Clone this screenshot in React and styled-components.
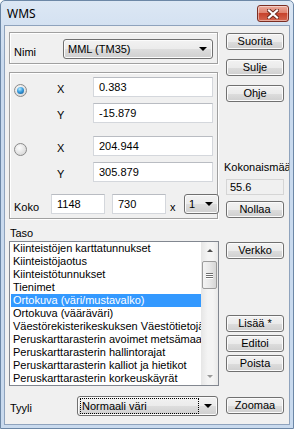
import React from 'react';
import styled, { createGlobalStyle, css } from 'styled-components';

const GlobalStyle = createGlobalStyle`
  html, body {
    margin: 0;
    padding: 0;
    background: #fff;
  }
  body {
    font-family: "Liberation Sans", Arial, sans-serif;
    font-size: 11px;
    color: #000;
  }
`;

const FONT = `11px "Liberation Sans", Arial, sans-serif`;

const Window = styled.div`
  box-sizing: border-box;
  width: 294px;
  height: 429px;
  display: flex;
  flex-direction: column;
  padding: 0 3px 3px 3px;
  border: 1px solid #6c87a6;
  border-radius: 5px 5px 0 0;
  background: linear-gradient(#dce7f4, #c9daee 60px, #c9daee);
`;

const TitleBar = styled.div`
  height: 24px;
  display: flex;
  align-items: flex-start;
  justify-content: space-between;
`;

const Title = styled.span`
  margin: 4px 0 0 3px;
  font: 12px "Noto Sans", "Open Sans", sans-serif;
  line-height: 17px;
  color: #000;
`;

const CloseButton = styled.div`
  box-sizing: border-box;
  width: 32px;
  height: 17px;
  margin: 4px 1px 0 0;
  display: flex;
  align-items: center;
  justify-content: center;
  border: 1px solid #7b2e23;
  border-radius: 3px;
  background: linear-gradient(#eaa99c 0%, #e08470 45%, #c7432c 50%, #d4664f 100%);
  box-shadow: inset 0 0 0 1px rgba(255, 255, 255, 0.45);
`;

const Body = styled.div`
  flex: 1;
  overflow: hidden;
  display: flex;
  flex-direction: column;
  padding: 6px 5px 0 4px;
  background: #f0f0f0;
  border: 1px solid #8fa3bd;
`;

const Section = styled.div`
  display: grid;
  grid-template-columns: 209px 58px;
  column-gap: 8px;
  margin-top: ${({ $top }) => $top || 0}px;
  ${({ $height }) => $height && css`height: ${$height}px;`}
`;

const Column = styled.div`
  display: flex;
  flex-direction: column;
  padding-top: ${({ $pad }) => $pad || 0}px;
`;

const GroupBox = styled.div`
  box-sizing: border-box;
  height: ${({ $height }) => $height}px;
  margin-top: ${({ $top }) => $top || 0}px;
  border: 1px solid #a0a0a0;
  box-shadow: inset 1px 1px 0 #fff, 1px 1px 0 #fff;
  padding: ${({ $pad }) => $pad};
`;

const Label = styled.span`
  line-height: 13px;
  white-space: nowrap;
  padding-top: ${({ $pad }) => $pad || 0}px;
  margin-top: ${({ $top }) => $top || 0}px;
  ${({ $width }) => $width && css`width: ${$width}px; flex-shrink: 0;`}
`;

const Row = styled.div`
  display: flex;
  align-items: flex-start;
  margin-top: ${({ $top }) => $top || 0}px;
`;

const Gap = styled.span`
  flex: 0 0 ${({ $size }) => $size}px;
`;

const TextBox = styled.div`
  box-sizing: border-box;
  width: ${({ $width }) => $width}px;
  height: 20px;
  padding: 0 0 0 5px;
  line-height: 18px;
  background: #fff;
  border: 1px solid #d4d7dc;
  border-top-color: #b9bcc2;
  flex-shrink: 0;
`;

const ReadOnlyBox = styled.div`
  box-sizing: border-box;
  width: 58px;
  height: 16px;
  margin-top: 5px;
  padding-left: 3px;
  line-height: 14px;
  background: #f0f0f0;
  border: 1px solid #d5d5d5;
`;

const buttonFace = css`
  border: 1px solid #707070;
  border-radius: 3px;
  background: linear-gradient(#f2f2f2 0%, #ebebeb 50%, #dddddd 51%, #cfcfcf 100%);
  box-shadow: inset 0 0 0 1px #fbfbfb;
`;

const Button = styled.div`
  box-sizing: border-box;
  width: 58px;
  height: 17px;
  margin-top: ${({ $top }) => $top || 0}px;
  font: ${FONT};
  line-height: 15px;
  text-align: center;
  white-space: nowrap;
  ${buttonFace}
`;

const Combo = styled.div`
  box-sizing: border-box;
  width: ${({ $width }) => $width}px;
  height: 20px;
  display: flex;
  align-items: center;
  justify-content: space-between;
  padding: 0 4px 0 3px;
  flex-shrink: 0;
  ${buttonFace}
`;

const ComboText = styled.span`
  line-height: 14px;
  padding: 0 1px;
  ${({ $focus }) => $focus && css`
    flex: 1;
    margin-right: 6px;
    outline: 1px dotted #000;
    outline-offset: 0;
  `}
`;

const Arrow = styled.span`
  width: 0;
  height: 0;
  border-left: 4px solid transparent;
  border-right: 4px solid transparent;
  border-top: 4px solid #000;
  margin-right: 1px;
`;

const Radio = styled.span`
  box-sizing: border-box;
  width: 13px;
  height: 13px;
  margin-top: 7px;
  border-radius: 50%;
  border: 1px solid #8a8a8a;
  background: radial-gradient(circle at 40% 35%, #fdfdfd, #d8d8d8 80%);
  display: flex;
  align-items: center;
  justify-content: center;

  &::after {
    content: '';
    width: 7px;
    height: 7px;
    border-radius: 50%;
    display: ${({ $checked }) => ($checked ? 'block' : 'none')};
    background: radial-gradient(circle at 40% 30%, #b6ecff 0%, #3b9ee0 45%, #0d4f86 100%);
  }
`;

const PointGrid = styled.div`
  display: grid;
  grid-template-columns: 43px 36px 120px;
  grid-template-rows: 20px 20px;
  row-gap: 6px;
  align-items: start;
  margin-top: ${({ $top }) => $top || 0}px;
`;

const ListBox = styled.div`
  box-sizing: border-box;
  height: 145px;
  width: 210px;
  margin-top: 1px;
  display: flex;
  background: #fff;
  border: 1px solid #828790;
`;

const ListRows = styled.div`
  flex: 1;
  overflow: hidden;
  padding-left: 1px;
`;

const ListItem = styled.div`
  height: 13px;
  line-height: 13px;
  padding-left: 2px;
  white-space: nowrap;
  ${({ $selected }) => $selected && css`
    background: #3399ff;
    color: #fff;
  `}
`;

const ScrollBar = styled.div`
  width: 17px;
  display: flex;
  flex-direction: column;
  align-items: center;
  background: linear-gradient(to right, #e6e6e6, #f4f4f4 40%, #f4f4f4 70%, #e9e9e9);
`;

const ScrollArrow = styled.div`
  height: 17px;
  width: 17px;
  display: flex;
  align-items: center;
  justify-content: center;

  &::before {
    content: '';
    width: 0;
    height: 0;
    border-left: 3px solid transparent;
    border-right: 3px solid transparent;
    ${({ $down }) => ($down ? 'border-top: 3px solid #9a9a9a;' : 'border-bottom: 3px solid #4d4d4d;')}
  }
`;

const Thumb = styled.div`
  box-sizing: border-box;
  width: 15px;
  height: 28px;
  margin-top: 2px;
  border: 1px solid #9b9b9b;
  border-radius: 2px;
  background: linear-gradient(to right, #f3f3f3, #e8e8e8 50%, #d6d6d6);
  display: flex;
  flex-direction: column;
  align-items: center;
  justify-content: center;
  gap: 1px;
`;

const Grip = styled.span`
  width: 7px;
  height: 1px;
  background: #6f6f6f;
  box-shadow: 0 1px 0 #fff;
`;

const Spacer = styled.div`
  flex: 1;
`;

const layers = [
  'Kiinteistöjen karttatunnukset',
  'Kiinteistöjaotus',
  'Kiinteistötunnukset',
  'Tienimet',
  'Ortokuva (väri/mustavalko)',
  'Ortokuva (vääräväri)',
  'Väestörekisterikeskuksen Väestötietojärjestelmä',
  'Peruskarttarasterin avoimet metsämaat',
  'Peruskarttarasterin hallintorajat',
  'Peruskarttarasterin kalliot ja hietikot',
  'Peruskarttarasterin korkeuskäyrät',
];

const points = [
  { x: '0.383', y: '-15.879', checked: true },
  { x: '204.944', y: '305.879', checked: false },
];

const CloseIcon = () => (
  <svg width="12" height="10" viewBox="0 0 12 10">
    <path d="M2 1.5 L10 8.5 M10 1.5 L2 8.5" stroke="#6b2a20" strokeWidth="4" strokeLinecap="square" />
    <path d="M2 1.5 L10 8.5 M10 1.5 L2 8.5" stroke="#fff" strokeWidth="2.2" strokeLinecap="square" />
  </svg>
);

export default function App() {
  return (
    <>
      <GlobalStyle />
      <Window>
        <TitleBar>
          <Title>WMS</Title>
          <CloseButton><CloseIcon /></CloseButton>
        </TitleBar>
        <Body>
          <Section $height={187}>
            <Column>
              <GroupBox $height={32} $pad="6px 4px 0 4px">
                <Row>
                  <Label $width={49} $pad={7}>Nimi</Label>
                  <Combo $width={150}>
                    <ComboText>MML (TM35)</ComboText>
                    <Arrow />
                  </Combo>
                </Row>
              </GroupBox>
              <GroupBox $height={147} $top={8} $pad="4px 4px 0 4px">
                {points.map((p, i) => (
                  <PointGrid key={p.x} $top={i ? 13 : 0}>
                    <Radio $checked={p.checked} />
                    <Label $pad={6}>X</Label>
                    <TextBox $width={120}>{p.x}</TextBox>
                    <span />
                    <Label $pad={6}>Y</Label>
                    <TextBox $width={120}>{p.y}</TextBox>
                  </PointGrid>
                ))}
                <Row $top={12}>
                  <Label $width={37} $pad={7}>Koko</Label>
                  <TextBox $width={54}>1148</TextBox>
                  <Gap $size={7} />
                  <TextBox $width={54}>730</TextBox>
                  <Label $width={14} $pad={7} style={{ paddingLeft: 4 }}>x</Label>
                  <Combo $width={35}>
                    <ComboText>1</ComboText>
                    <Arrow />
                  </Combo>
                </Row>
              </GroupBox>
            </Column>
            <Column>
              <Button $top={1}>Suorita</Button>
              <Button $top={9}>Sulje</Button>
              <Button $top={9}>Ohje</Button>
              <Spacer />
              <Label style={{ marginLeft: -2 }}>Kokonaismäärä</Label>
              <ReadOnlyBox>55.6</ReadOnlyBox>
              <Button $top={6}>Nollaa</Button>
              <Gap $size={1} />
            </Column>
          </Section>

          <Section $top={8}>
            <Column>
              <Label style={{ paddingLeft: 1 }}>Taso</Label>
              <ListBox>
                <ListRows>
                  {layers.map((name, i) => (
                    <ListItem key={name} $selected={i === 4}>{name}</ListItem>
                  ))}
                </ListRows>
                <ScrollBar>
                  <ScrollArrow />
                  <Thumb>
                    <Grip />
                    <Grip />
                    <Grip />
                  </Thumb>
                  <Spacer />
                  <ScrollArrow $down />
                </ScrollBar>
              </ListBox>
            </Column>
            <Column $pad={15}>
              <Button>Verkko</Button>
              <Button $top={56}>Lisää *</Button>
              <Button $top={3}>Editoi</Button>
              <Button $top={3}>Poista</Button>
            </Column>
          </Section>

          <Section $top={10}>
            <Row>
              <Label $width={67} $pad={6} style={{ paddingLeft: 1 }}>Tyyli</Label>
              <Combo $width={141}>
                <ComboText $focus>Normaali väri</ComboText>
                <Arrow />
              </Combo>
            </Row>
            <Column $pad={1}>
              <Button>Zoomaa</Button>
            </Column>
          </Section>
        </Body>
      </Window>
    </>
  );
}
